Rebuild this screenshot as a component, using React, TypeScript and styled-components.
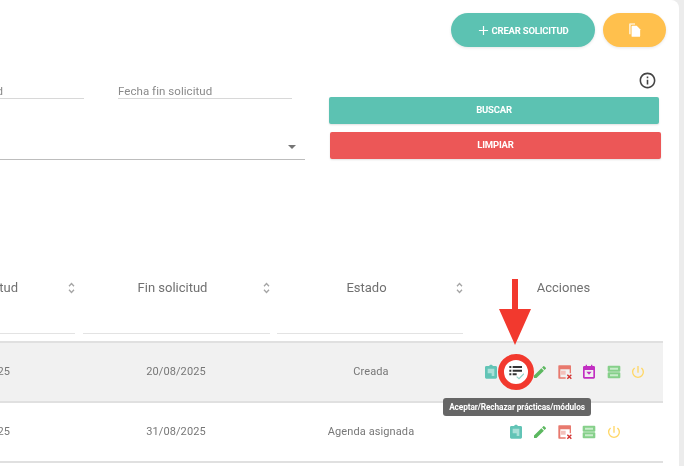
import React from 'react';
import styled, { createGlobalStyle } from 'styled-components';

const GlobalStyle = createGlobalStyle`
  html, body {
    margin: 0;
    padding: 0;
    background: #ececec;
    font-family: Roboto, "Liberation Sans", sans-serif;
  }
`;

const Page = styled.div`
  width: 684px;
  height: 466px;
  overflow: hidden;
  position: relative;
  filter: blur(0.3px);
`;

const Card = styled.div`
  width: 679px;
  height: 466px;
  background: #fff;
  border-top-right-radius: 8px;
  overflow: hidden;
`;

const Toolbar = styled.div`
  display: flex;
  justify-content: flex-end;
  gap: 8px;
  padding: 13px 13px 0 0;
`;

const PillButton = styled.button<{ $bg: string; $width: number }>`
  width: ${(p) => p.$width}px;
  height: 34px;
  border: 0;
  padding: 0;
  border-radius: 17px;
  background: ${(p) => p.$bg};
  color: #fff;
  font: 700 9.5px Roboto, sans-serif;
  letter-spacing: -0.2px;
  display: flex;
  align-items: center;
  justify-content: center;
  gap: 3px;
  box-shadow: 0 1px 3px rgba(0, 0, 0, 0.1);
`;

const FilterArea = styled.div`
  display: flex;
  gap: 24px;
  margin-top: 24px;
`;

const FieldsColumn = styled.div`
  width: 305px;
`;

const DateRow = styled.div`
  display: flex;
  gap: 34px;
  padding-top: 12px;
`;

const DateField = styled.div<{ $width: number; $clipped?: boolean }>`
  width: ${(p) => p.$width}px;
  height: 16px;
  border-bottom: 1px solid #d8d8d8;
  font-size: 11.5px;
  line-height: 16px;
  letter-spacing: 0.05px;
  color: #8a8a8a;
  overflow: hidden;
  white-space: nowrap;
  direction: ${(p) => (p.$clipped ? 'rtl' : 'ltr')};
  padding-right: ${(p) => (p.$clipped ? 81 : 0)}px;
  box-sizing: border-box;
`;

const SelectField = styled.div`
  height: 39px;
  margin-top: 21px;
  border-bottom: 1px solid #bdbdbd;
  display: flex;
  align-items: center;
  justify-content: flex-end;
  padding-right: 9px;
`;

const SelectCaret = styled.span`
  width: 0;
  height: 0;
  border-left: 4.5px solid transparent;
  border-right: 4.5px solid transparent;
  border-top: 4.5px solid #757575;
  margin-top: 15px;
`;

const ActionsColumn = styled.div`
  width: 332px;
  display: flex;
  flex-direction: column;
`;

const InfoRow = styled.div`
  height: 26px;
  display: flex;
  justify-content: flex-end;
  padding-right: 4px;
`;

const WideButton = styled.button<{ $bg: string }>`
  display: block;
  height: 27px;
  border: 0;
  padding: 0 0 2px;
  border-radius: 2px;
  background: ${(p) => p.$bg};
  color: #fff;
  font: 700 9.5px Roboto, sans-serif;
  letter-spacing: -0.2px;
  box-shadow: 0 1px 2px rgba(0, 0, 0, 0.12);
`;

const SearchButton = styled(WideButton)`
  width: 330px;
`;

const ClearButton = styled(WideButton)`
  width: 331px;
  margin: 8px 0 0 1px;
`;

const Table = styled.div`
  width: 663px;
  margin-top: 101px;
`;

const HeaderRow = styled.div`
  display: grid;
  grid-template-columns: 75px 187px 186px 193px;
  column-gap: 7.5px;
  height: 80px;
`;

const HeaderCell = styled.div`
  display: flex;
  flex-direction: column;
  min-width: 0;
  overflow: hidden;
`;

const HeaderTitle = styled.div`
  height: 53px;
  padding-right: 7px;
  display: flex;
  align-items: center;
  justify-content: center;
  position: relative;
  font-size: 13px;
  color: #707070;
  white-space: nowrap;
`;

const ClippedTitle = styled(HeaderTitle)`
  justify-content: flex-start;
  direction: rtl;
  padding-right: 57px;
`;

const SortMark = styled.svg`
  position: absolute;
  right: 0;
  top: 21px;
`;

const ColumnFilter = styled.div`
  height: 19px;
  border-bottom: 1px solid #e3e3e3;
`;

const DataRow = styled.div<{ $active?: boolean }>`
  display: grid;
  grid-template-columns: 79px 194px 196px 194px;
  height: 57px;
  padding-bottom: 1px;
  align-items: center;
  border-top: 2px solid #e0e0e0;
  background: ${(p) => (p.$active ? '#f1f1f1' : '#fff')};
  font-size: 11px;
  letter-spacing: 0.1px;
  color: #777;
  text-align: center;
`;

const DataEnd = styled.div`
  border-top: 2px solid #e0e0e0;
`;

const ClippedCell = styled.div`
  overflow: hidden;
  white-space: nowrap;
  direction: rtl;
  padding-right: 69px;
`;

const IconRow = styled.div`
  display: flex;
  justify-content: center;
  align-items: center;
  gap: 8.5px;
  padding-right: 3px;
`;

// highlighted action: red ring with a white inside, behind the icon
const RingedAction = styled.span`
  position: relative;
  z-index: 0;
  display: flex;

  &::before {
    content: '';
    position: absolute;
    inset: -10px;
    z-index: -1;
    box-sizing: border-box;
    border: 6px solid #f2392e;
    border-radius: 50%;
    background: #fff;
  }
`;

const Arrow = styled.svg`
  position: absolute;
  left: 499px;
  top: 279px;
`;

const Tooltip = styled.div`
  position: absolute;
  left: 443px;
  top: 398px;
  width: 148px;
  height: 18px;
  border-radius: 3px;
  background: #666;
  color: #fff;
  font-size: 8.3px;
  font-weight: 700;
  letter-spacing: -0.1px;
  line-height: 18px;
  text-align: center;
  white-space: nowrap;
`;

const Icon = ({ children, color }: { children: React.ReactNode; color: string }) => (
  <svg width="16" height="16" viewBox="0 0 24 24" fill={color}>
    {children}
  </svg>
);

const ClipboardIcon = () => (
  <Icon color="#62c4b6">
    <path d="M19 3h-4.200C14.400 1.800 13.300 1 12 1s-2.400.8-2.800 2H5c-1.100 0-2 .9-2 2v15c0 1.100.9 2 2 2h14c1.100 0 2-.9 2-2V5c0-1.100-.9-2-2-2z" />
    <path d="M7 7h10v11h-4v-4H7z" fill="#a9e0d8" />
  </Icon>
);

const ChecklistIcon = () => (
  <Icon color="#333">
    <path d="M2 3h3v3H2zM7 3h14v3H7zM2 8.500h3v3H2zM7 8.500h14v3H7zM2 14h3v3H2zM7 14h6v3H7z" />
    <path d="M13 19l3.500 3L24 14.500" fill="none" stroke="#8fd3c8" strokeWidth="1.800" />
  </Icon>
);

const PencilIcon = () => (
  <Icon color="#5cb860">
    <path d="M3 17.250V21h3.750L17.810 9.940l-3.750-3.750L3 17.250zM20.710 7.040a1 1 0 0 0 0-1.410l-2.340-2.340a1 1 0 0 0-1.410 0l-1.830 1.830 3.750 3.750 1.830-1.830z" />
  </Icon>
);

const CalendarCancelIcon = () => (
  <Icon color="#e8796e">
    <path d="M3 2h17a1 1 0 0 1 1 1v11h-2V8H5v12h8v2H3a1 1 0 0 1-1-1V3a1 1 0 0 1 1-1z" />
    <path d="M6 10h7v6H6z" fill="#f3c1bb" />
    <path d="M15.500 16l6 6M21.500 16l-6 6" stroke="#d32f2f" strokeWidth="2" fill="none" />
  </Icon>
);

const CalendarEventIcon = () => (
  <Icon color="#c22fc2">
    <path d="M7 1h2v2h6V1h2v2h2a2 2 0 0 1 2 2v15a2 2 0 0 1-2 2H5a2 2 0 0 1-2-2V5a2 2 0 0 1 2-2h2V1zM5.500 9v10.500h13V9h-13z" />
    <path d="M8 11.500h8L12 16z" />
  </Icon>
);

const StorageIcon = () => (
  <Icon color="#86d08a">
    <path d="M4 2.500h16a1.500 1.500 0 0 1 1.500 1.500v6a1.500 1.500 0 0 1-1.500 1.500H4A1.500 1.500 0 0 1 2.500 10V4A1.500 1.500 0 0 1 4 2.500zM4 12.500h16a1.500 1.500 0 0 1 1.500 1.500v6a1.500 1.500 0 0 1-1.500 1.500H4A1.500 1.500 0 0 1 2.500 20v-6A1.500 1.500 0 0 1 4 12.500z" />
    <path d="M6 5.500h12v3H6zM6 15.500h12v3H6z" fill="#c9eccb" />
  </Icon>
);

const PowerIcon = () => (
  <Icon color="#ffd766">
    <path d="M13 3h-2v10h2V3zm4.830 2.170l-1.420 1.420A6.920 6.920 0 0 1 19 12c0 3.870-3.130 7-7 7s-7-3.130-7-7c0-2.190 1.010-4.140 2.580-5.420L6.170 5.170A8.932 8.932 0 0 0 3 12a9 9 0 0 0 18 0c0-2.740-1.230-5.190-3.170-6.830z" />
  </Icon>
);

const SortIcon = () => (
  <SortMark width="7" height="12" viewBox="0 0 7 12" fill="none" stroke="#a5a5a5" strokeWidth="1.300">
    <path d="M1 4.200L3.500 1.500 6 4.200M1 7.800l2.500 2.700L6 7.800" />
  </SortMark>
);

const App: React.FC = () => {
  return (
    <Page>
      <GlobalStyle />
      <Card>
        <Toolbar>
          <PillButton $bg="#5cc2b2" $width={144}>
            <svg width="11" height="11" viewBox="0 0 12 12" stroke="#fff" strokeWidth="1.300">
              <path d="M6 1v10M1 6h10" />
            </svg>
            CREAR SOLICITUD
          </PillButton>
          <PillButton $bg="#ffc04d" $width={63}>
            <svg width="12" height="14" viewBox="0 0 14 16" fill="#fff">
              <path d="M0 1.500A1.500 1.500 0 0 1 1.500 0H7v2H3.500A1.500 1.500 0 0 0 2 3.500V13H1a1 1 0 0 1-1-1z" opacity="0.7" />
              <path d="M4 3h5l4 4v8a1 1 0 0 1-1 1H4a1 1 0 0 1-1-1V4a1 1 0 0 1 1-1z" />
            </svg>
          </PillButton>
        </Toolbar>
        <FilterArea>
          <FieldsColumn>
            <DateRow>
              <DateField $width={84} $clipped>
                Fecha inicio solicitud
              </DateField>
              <DateField $width={174}>Fecha fin solicitud</DateField>
            </DateRow>
            <SelectField>
              <SelectCaret />
            </SelectField>
          </FieldsColumn>
          <ActionsColumn>
            <InfoRow>
              <svg width="19" height="19" viewBox="0 0 24 24" fill="#444">
                <path d="M11 7h2v2h-2zm0 4h2v6h-2zm1-9C6.480 2 2 6.480 2 12s4.480 10 10 10 10-4.480 10-10S17.520 2 12 2zm0 18c-4.410 0-8-3.590-8-8s3.590-8 8-8 8 3.590 8 8-3.590 8-8 8z" />
              </svg>
            </InfoRow>
            <SearchButton $bg="#5cc2b2">BUSCAR</SearchButton>
            <ClearButton $bg="#ec5757">LIMPIAR</ClearButton>
          </ActionsColumn>
        </FilterArea>
        <Table>
          <HeaderRow>
            <HeaderCell>
              <ClippedTitle>
                Inicio solicitud
                <SortIcon />
              </ClippedTitle>
              <ColumnFilter />
            </HeaderCell>
            <HeaderCell>
              <HeaderTitle>
                Fin solicitud
                <SortIcon />
              </HeaderTitle>
              <ColumnFilter />
            </HeaderCell>
            <HeaderCell>
              <HeaderTitle>
                Estado
                <SortIcon />
              </HeaderTitle>
              <ColumnFilter />
            </HeaderCell>
            <HeaderCell>
              <HeaderTitle>Acciones</HeaderTitle>
            </HeaderCell>
          </HeaderRow>
          <DataRow $active>
            <ClippedCell>01/08/2025</ClippedCell>
            <div>20/08/2025</div>
            <div>Creada</div>
            <IconRow>
              <ClipboardIcon />
              <RingedAction>
                <ChecklistIcon />
              </RingedAction>
              <PencilIcon />
              <CalendarCancelIcon />
              <CalendarEventIcon />
              <StorageIcon />
              <PowerIcon />
            </IconRow>
          </DataRow>
          <DataRow>
            <ClippedCell>01/08/2025</ClippedCell>
            <div>31/08/2025</div>
            <div>Agenda asignada</div>
            <IconRow>
              <ClipboardIcon />
              <PencilIcon />
              <CalendarCancelIcon />
              <StorageIcon />
              <PowerIcon />
            </IconRow>
          </DataRow>
          <DataEnd />
        </Table>
      </Card>
      <Arrow width="32" height="66" viewBox="0 0 32 66" fill="#f2392e">
        <path d="M13 0h6v30h13L16 66 0 30h13z" />
      </Arrow>
      <Tooltip>Aceptar/Rechazar prácticas/módulos</Tooltip>
    </Page>
  );
};

export default App;
